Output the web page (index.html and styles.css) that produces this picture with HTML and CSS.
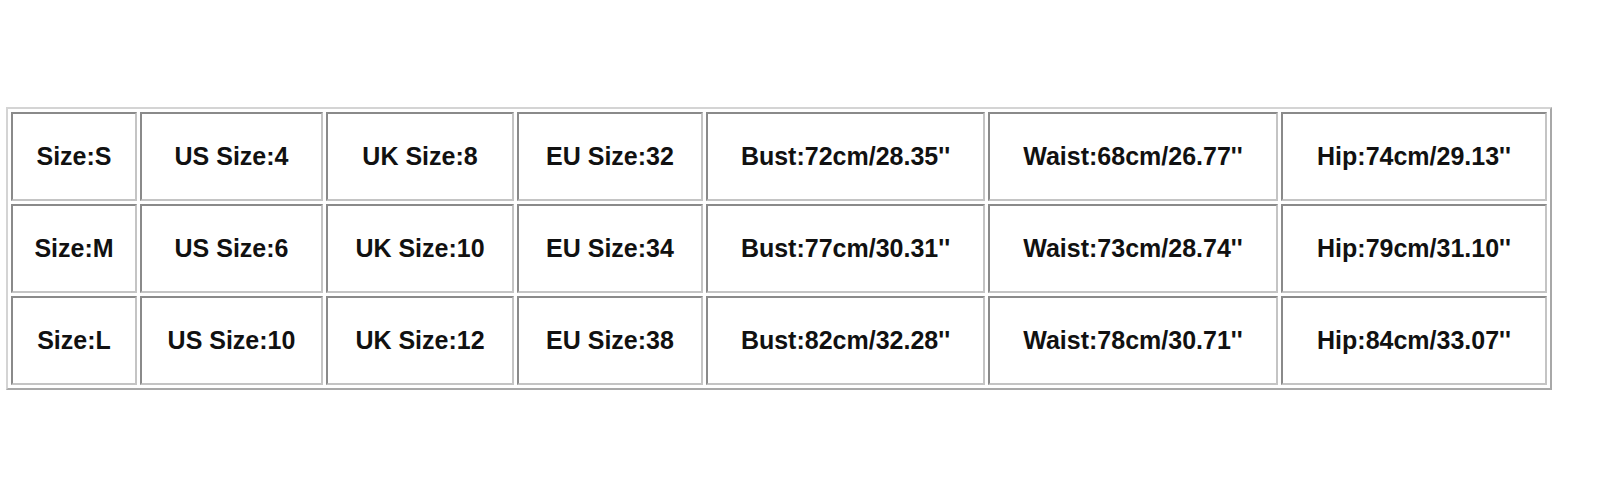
FILE: index.html
```html
<!DOCTYPE html>
<html>
<head>
<meta charset="utf-8">
<link rel="stylesheet" href="styles.css">
</head>
<body>
<table class="size-table">
  <colgroup>
    <col class="c1"><col class="c2"><col class="c3"><col class="c4"><col class="c5"><col class="c6"><col class="c7">
  </colgroup>
  <tr>
    <td>Size:S</td><td>US Size:4</td><td>UK Size:8</td><td>EU Size:32</td><td>Bust:72cm/28.35''</td><td>Waist:68cm/26.77''</td><td>Hip:74cm/29.13''</td>
  </tr>
  <tr>
    <td>Size:M</td><td>US Size:6</td><td>UK Size:10</td><td>EU Size:34</td><td>Bust:77cm/30.31''</td><td>Waist:73cm/28.74''</td><td>Hip:79cm/31.10''</td>
  </tr>
  <tr>
    <td>Size:L</td><td>US Size:10</td><td>UK Size:12</td><td>EU Size:38</td><td>Bust:82cm/32.28''</td><td>Waist:78cm/30.71''</td><td>Hip:84cm/33.07''</td>
  </tr>
</table>
</body>
</html>
```
FILE: styles.css
```css
html, body {
  margin: 0;
  padding: 0;
  background: #ffffff;
}
body {
  padding: 107px 0 0 6px;
}
.size-table {
  width: 1546px;
  table-layout: fixed;
  border-collapse: separate;
  border-spacing: 3px;
  border-style: solid;
  border-width: 2px;
  border-color: #d4d4d4 #a8a8a8 #a8a8a8 #d4d4d4;
}
.c1 { width: 126px; }
.c2 { width: 183px; }
.c3 { width: 188px; }
.c4 { width: 186px; }
.c5 { width: 279px; }
.c6 { width: 290px; }
.c7 { width: 266px; }
.size-table td {
  box-sizing: border-box;
  height: 89px;
  padding: 0;
  border-style: solid;
  border-width: 2px;
  border-color: #8a8a8a #c4c4c4 #c4c4c4 #8a8a8a;
  text-align: center;
  vertical-align: middle;
  font-family: "Liberation Sans", Arial, sans-serif;
  font-weight: bold;
  font-size: 25px;
  color: #111111;
  white-space: nowrap;
}
```
